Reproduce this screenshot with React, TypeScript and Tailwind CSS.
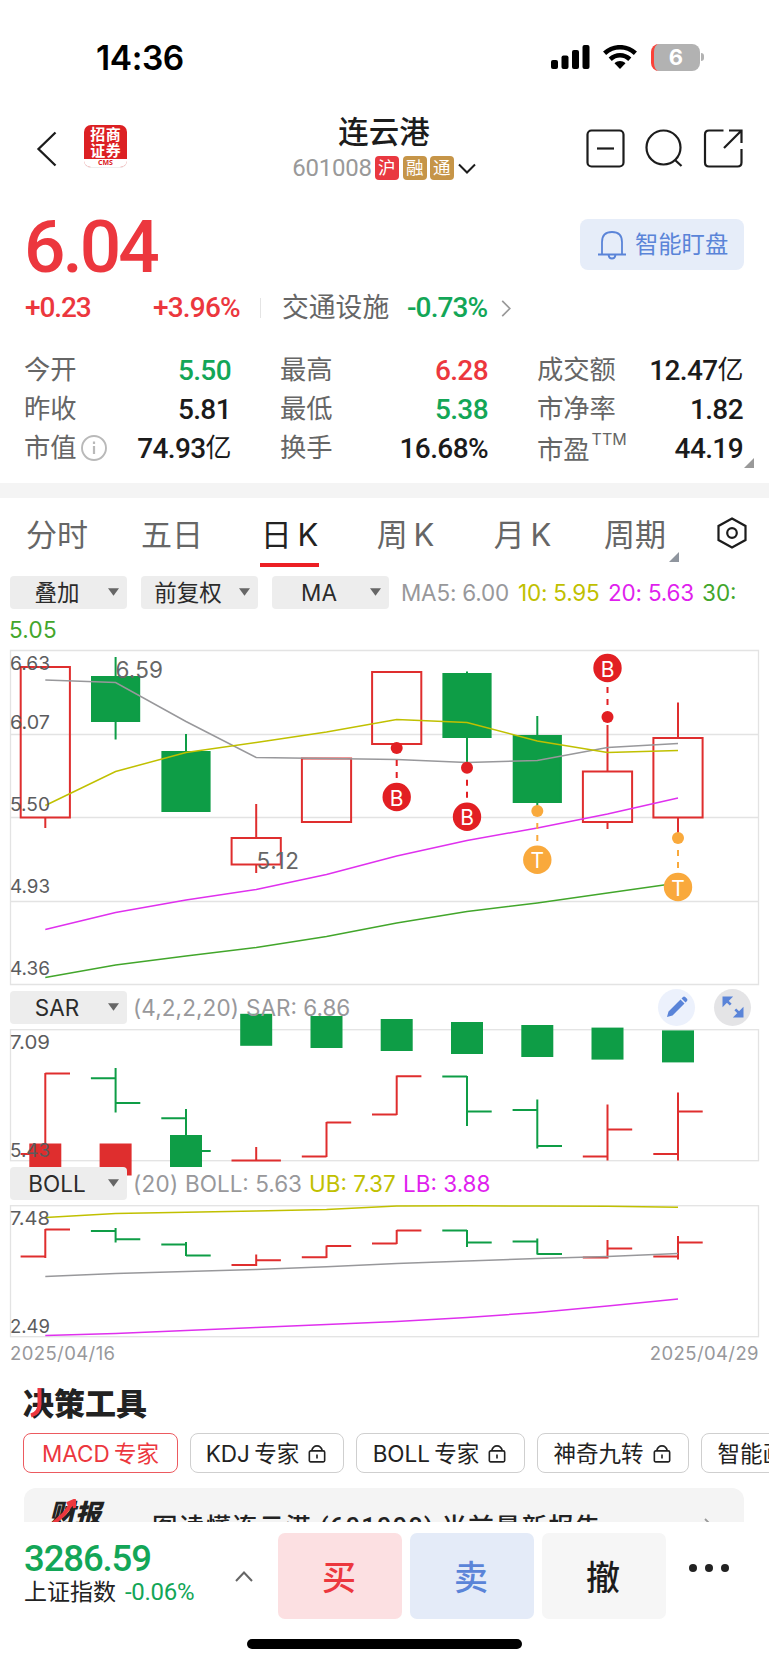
import { clsx } from "clsx";
import type { ReactNode } from "react";

const RED = "#df2e2e";
const GREEN = "#0e9d46";

// open, close, high, low as y values inside the panel
type Bar = { up: boolean; o: number; c: number; h: number; l: number };

const X = [45.3, 115.6, 186, 256.2, 326.5, 396.7, 467, 537.3, 607.5, 678];

const bar = (up: boolean, o: number, c: number, h: number, l: number): Bar => ({ up, o, c, h, l });

const CANDLES: Bar[] = [
  bar(true, 817.5, 667, 667, 828),
  bar(false, 677, 721, 657, 739.5),
  bar(false, 752, 811, 734, 811),
  bar(true, 864.5, 838, 804, 873),
  bar(true, 822, 758.5, 758.5, 822),
  bar(true, 744, 672, 672, 744),
  bar(false, 674, 737, 671.5, 765),
  bar(false, 736, 802, 716, 806),
  bar(true, 822, 771.5, 725, 829),
  bar(true, 817.5, 738, 702.5, 835),
];

const AVERAGES = [
  { color: "#98989b", ys: [680, 682.5, 721.5, 757.5, 758.5, 759.5, 762.5, 760.5, 747.5, 743.5] },
  { color: "#c0c000", ys: [805.5, 771.5, 752.5, 742.5, 732, 719.5, 722.5, 741, 752.5, 750.5] },
  { color: "#df30ee", ys: [929.5, 912.5, 900, 889.5, 874.5, 856, 840.5, 828, 814, 798] },
  { color: "#42a62b", ys: [977.5, 965, 956, 947.5, 936.5, 923, 911.5, 903, 893, 883] },
];

const MARKS = [
  { i: 5, label: "B", dot: 748, y: 797 },
  { i: 6, label: "B", dot: 767.8, y: 816.7 },
  { i: 7, label: "T", dot: 811, y: 859.7 },
  { i: 8, label: "B", dot: 717, y: 668 },
  { i: 9, label: "T", dot: 838, y: 887 },
];

const SAR_BARS: Bar[] = [
  bar(true, 1154, 1073.5, 1073, 1155),
  bar(false, 1078.3, 1103, 1068, 1112.5),
  bar(false, 1118.3, 1151, 1109, 1151),
  bar(true, 1160.5, 1160.5, 1147, 1160.5),
  bar(true, 1156.5, 1122.5, 1122, 1157),
  bar(true, 1114.5, 1076.2, 1075.5, 1115),
  bar(false, 1076.5, 1111.5, 1076, 1126),
  bar(false, 1110, 1146, 1099.5, 1148.5),
  bar(true, 1156.5, 1129.5, 1104.5, 1160.5),
  bar(true, 1154, 1111.5, 1092.5, 1160.5),
];

const SAR_TOPS = [1143.5, 1143.5, 1135, 1013.8, 1016, 1019, 1022, 1025, 1027.6, 1030.4];

const BOLL_BARS: Bar[] = [
  bar(true, 1256.5, 1229.5, 1229, 1258),
  bar(false, 1231, 1239.3, 1228, 1242.5),
  bar(false, 1244.5, 1255.5, 1242, 1256),
  bar(true, 1265, 1260.3, 1254.5, 1266),
  bar(true, 1257.3, 1246, 1245.5, 1258),
  bar(true, 1243.4, 1230.4, 1230, 1244),
  bar(false, 1230.6, 1242.4, 1230, 1247),
  bar(false, 1241.6, 1254, 1238.5, 1254.5),
  bar(true, 1257.5, 1248.4, 1240, 1258.5),
  bar(true, 1256.5, 1242.4, 1236, 1259.5),
];

const BANDS = [
  { color: "#c0c000", ys: [1217.5, 1213.5, 1212.3, 1211, 1209.5, 1206, 1205.8, 1206, 1206.3, 1207.3] },
  { color: "#98989b", ys: [1276.5, 1273.5, 1271.5, 1269.5, 1266.8, 1263.5, 1261, 1258.5, 1256.5, 1253.5] },
  { color: "#df30ee", ys: [1335.5, 1333.5, 1330.5, 1327.5, 1324.5, 1321.5, 1317.5, 1312.5, 1306, 1299] },
];

const STATS = [
  [
    { name: "今开", value: "5.50", tone: "text-[#13a657]" },
    { name: "最高", value: "6.28", tone: "text-[#ec373e]" },
    { name: "成交额", value: "12.47亿", tone: "text-[#1b1b1b]" },
  ],
  [
    { name: "昨收", value: "5.81", tone: "text-[#1b1b1b]" },
    { name: "最低", value: "5.38", tone: "text-[#13a657]" },
    { name: "市净率", value: "1.82", tone: "text-[#1b1b1b]" },
  ],
  [
    { name: "市值", value: "74.93亿", tone: "text-[#1b1b1b]", info: true },
    { name: "换手", value: "16.68%", tone: "text-[#1b1b1b]" },
    { name: "市盈", sup: "TTM", value: "44.19", tone: "text-[#1b1b1b]", corner: true },
  ],
];

const TABS = [
  { label: "分时", box: "w-[62px] ml-[26px]" },
  { label: "五日", box: "w-[62px] ml-[53px]" },
  { label: "日 K", box: "w-[59px] ml-[57px]", active: true },
  { label: "周 K", box: "w-[59px] ml-[57px]" },
  { label: "月 K", box: "w-[59px] ml-[58px]" },
  { label: "周期", box: "w-[62px] ml-[52px]", corner: true },
];

const TOOLS = [
  { label: "MACD 专家", box: "w-[155px]", active: true },
  { label: "KDJ 专家", box: "w-[154px]" },
  { label: "BOLL 专家", box: "w-[169px]" },
  { label: "神奇九转", box: "w-[152px]" },
  { label: "智能画线", box: "w-[152px]" },
];

function Lines({ series }: { series: { color: string; ys: number[] }[] }) {
  return (
    <>
      {series.map((s, n) => (
        <polyline
          key={n}
          points={s.ys.map((y, i) => `${X[i]},${y}`).join(" ")}
          fill="none"
          stroke={s.color}
          strokeWidth="1.5"
        />
      ))}
    </>
  );
}

function OhlcBars({ bars }: { bars: Bar[] }) {
  return (
    <>
      {bars.map((b, i) => (
        <path
          key={i}
          d={`M${X[i] - 24.7} ${b.o}H${X[i]}M${X[i]} ${b.c}H${X[i] + 24.7}M${X[i]} ${b.h}V${b.l}`}
          stroke={b.up ? RED : GREEN}
          strokeWidth="2"
          fill="none"
        />
      ))}
    </>
  );
}

function AxisText({ y, children }: { y: number; children: ReactNode }) {
  return (
    <text x="10" y={y} fontSize="19" fill="#5c5c5e" textLength="40" lengthAdjust="spacingAndGlyphs">
      {children}
    </text>
  );
}

function CandleChart() {
  return (
    <svg viewBox="0 650 769 335" className="block h-[335px] w-[769px] shrink-0 overflow-visible font-['Inter']">
      <path
        d="M10.5 650.5H758.5V984.5H10.5ZM10 734.5H758M10 817.5H758M10 901.5H758"
        fill="none"
        stroke="#e3e3e3"
        strokeWidth="1.3"
      />
      {CANDLES.map((c, i) => {
        const top = Math.min(c.o, c.c);
        const bottom = Math.max(c.o, c.c);
        return (
          <g key={i} stroke={c.up ? RED : GREEN} strokeWidth="2">
            <path d={`M${X[i]} ${c.h}V${top}M${X[i]} ${bottom}V${c.l}`} />
            <rect
              x={X[i] - (c.up ? 24.6 : 23.6)}
              y={top}
              width={c.up ? 49.2 : 47.2}
              height={bottom - top}
              fill={c.up ? "none" : GREEN}
            />
          </g>
        );
      })}
      <Lines series={AVERAGES} />
      <AxisText y={669.5}>6.63</AxisText>
      <AxisText y={728.5}>6.07</AxisText>
      <AxisText y={810.5}>5.50</AxisText>
      <AxisText y={892.5}>4.93</AxisText>
      <AxisText y={974.5}>4.36</AxisText>
      <text x="115.5" y="677.5" fontSize="22.5" fill="#666" textLength="47.5">6.59</text>
      <text x="256.5" y="869" fontSize="22.5" fill="#666" textLength="42.5">5.12</text>
      {MARKS.map((m) => {
        const color = m.label === "B" ? "#e21f23" : "#f9a93c";
        const dir = m.y > m.dot ? 1 : -1;
        return (
          <g key={m.i}>
            <line
              x1={X[m.i]}
              x2={X[m.i]}
              y1={m.dot + dir * 12}
              y2={m.y - dir * 14}
              stroke={color}
              strokeWidth="2"
              strokeDasharray="6 6"
            />
            <circle cx={X[m.i]} cy={m.dot} r="6" fill={color} />
            <circle cx={X[m.i]} cy={m.y} r="14.2" fill={color} />
            <text x={X[m.i]} y={m.y + 8.5} fontSize="21" fill="#fff" textAnchor="middle">
              {m.label}
            </text>
          </g>
        );
      })}
    </svg>
  );
}

function SarChart() {
  return (
    <svg viewBox="0 1029 769 132" className="block h-[132px] w-[769px] shrink-0 overflow-visible font-['Inter']">
      <rect x="10.5" y="1029.7" width="748" height="131" fill="none" stroke="#e3e3e3" strokeWidth="1.3" />
      <OhlcBars bars={SAR_BARS} />
      {SAR_TOPS.map((y, i) => (
        <rect key={i} x={X[i] - 16} y={y} width="32" height="32" fill={i < 2 ? RED : GREEN} />
      ))}
      <AxisText y={1048.5}>7.09</AxisText>
      <AxisText y={1156.5}>5.43</AxisText>
    </svg>
  );
}

function BollChart() {
  return (
    <svg viewBox="0 1205 769 132" className="block h-[132px] w-[769px] shrink-0 overflow-visible font-['Inter']">
      <rect x="10.5" y="1205.7" width="748" height="131" fill="none" stroke="#e3e3e3" strokeWidth="1.3" />
      <OhlcBars bars={BOLL_BARS} />
      <Lines series={BANDS} />
      <AxisText y={1224.5}>7.48</AxisText>
      <AxisText y={1332.5}>2.49</AxisText>
    </svg>
  );
}

function Dropdown({ children }: { children: ReactNode }) {
  return (
    <button
      type="button"
      className="relative flex h-[33px] w-[117px] shrink-0 items-center rounded-[4px] bg-[#ededed] pt-px pr-[23px] text-[22.5px] text-[#2b2b2b]"
    >
      <span className="flex-1 text-center whitespace-nowrap">{children}</span>
      <svg viewBox="0 0 12 8" className="absolute top-[12px] right-[8px] h-[8px] w-[11px] fill-[#666]">
        <path d="M0 0H12L6 8Z" />
      </svg>
    </button>
  );
}

function Lock() {
  return (
    <svg viewBox="0 0 20 20" className="h-[20px] w-[18px]" fill="none" stroke="#222" strokeWidth="1.8">
      <rect x="1.5" y="6.5" width="17" height="12.3" rx="1.5" />
      <path d="M4 6.5C5 3 7 1 10 1s5 2 6 5.5M10 10.5V15" />
    </svg>
  );
}

function StatusBar() {
  return (
    <div className="flex h-[110px] shrink-0 items-center pl-[96px] font-['Inter']">
      <span className="mt-[7px] w-[455px] text-[33.5px] leading-none font-semibold tracking-[-0.4px] text-black">14:36</span>
      <svg viewBox="0 0 39 24" className="mt-[4px] h-[24px] w-[39px]">
        <rect x="0" y="15" width="7" height="9" rx="2" />
        <rect x="10.5" y="10.5" width="7" height="13.5" rx="2" />
        <rect x="21" y="5" width="7" height="19" rx="2" />
        <rect x="31.5" y="0" width="7" height="24" rx="2" />
      </svg>
      <svg viewBox="0 0 34 24" className="mt-[4px] ml-[13px] h-[24px] w-[34px]" fill="none" stroke="#000" strokeWidth="4.6">
        <path d="M1.6 8.3C10.5 0.2 23.5 0.2 32.4 8.3" />
        <path d="M7.2 14.2C13 8.9 21 8.9 26.8 14.2" />
        <path d="M11.5 18.2C14.5 15.4 19.5 15.4 22.5 18.2L17 24Z" fill="#000" stroke="none" />
      </svg>
      <div className="mt-[4px] ml-[14px] flex h-[27px] w-[49px] items-center justify-center overflow-hidden rounded-[8px] border-l-[3px] border-[#fb4238] bg-[#b2b2b2] pr-[2px] text-[22px] font-bold text-white">
        6
      </div>
      <div className="mt-[4px] ml-[1px] h-[8px] w-[3px] rounded-r-full bg-[#b2b2b2]" />
    </div>
  );
}

function TopNav() {
  return (
    <div className="flex h-[84px] shrink-0 pl-[36px] text-[#1c1c1c]">
      <svg viewBox="0 0 21 36" className="mt-[21px] h-[36px] w-[21px]" fill="none" stroke="currentColor" strokeWidth="2.3">
        <path d="M19.5 1.5L2.5 18L19.5 34.5" />
      </svg>
      <div className="mt-[15px] ml-[27px] flex h-[43px] w-[43px] flex-col overflow-hidden rounded-[7px] border-b border-[#eee] bg-[#dc2023] text-center">
        <div className="grid h-[35px] grid-cols-2 justify-center px-[6px] pt-[2px] text-[15px] leading-[16px] font-bold text-white">
          <span>招</span>
          <span>商</span>
          <span>证</span>
          <span>券</span>
        </div>
        <div className="h-[8px] bg-white font-['Open_Sans'] text-[7px] leading-[8px] font-bold text-[#dc2023]">CMS</div>
      </div>
      <div className="ml-[157px] flex w-[200px] flex-col items-center">
        <h1 className="mt-[2px] text-[30.5px] leading-[40px] font-medium">连云港</h1>
        <div className="mt-[4px] flex h-[24px] items-center">
          <span className="mr-[3px] font-['Roboto'] text-[24px] tracking-[-0.2px] text-[#999]">601008</span>
          <span className="mr-[4px] flex size-[24px] items-center justify-center rounded-[4px] bg-[#e93840] text-[17.5px] text-white">沪</span>
          <span className="mr-[3px] flex size-[24px] items-center justify-center rounded-[4px] bg-[#c69548] text-[17.5px] text-white">融</span>
          <span className="mr-[4px] flex size-[24px] items-center justify-center rounded-[4px] bg-[#c69548] text-[17.5px] text-white">通</span>
          <svg viewBox="0 0 18 11" className="h-[11px] w-[18px]" fill="none" stroke="currentColor" strokeWidth="2">
            <path d="M1 1.5L9 9.5L17 1.5" />
          </svg>
        </div>
      </div>
      <svg viewBox="0 0 39 39" className="mt-[19px] ml-[102px] h-[39px] w-[39px]" fill="none" stroke="currentColor" strokeWidth="2.2">
        <rect x="1.5" y="1.5" width="36" height="36" rx="4" />
        <path d="M11 19.5H28" />
      </svg>
      <svg viewBox="0 0 39 39" className="mt-[19px] ml-[20px] h-[39px] w-[39px]" fill="none" stroke="currentColor" strokeWidth="2.2">
        <circle cx="18.5" cy="18.5" r="17" />
        <path d="M30 31L36.5 37" />
      </svg>
      <svg viewBox="0 0 40 39" className="mt-[19px] ml-[19px] h-[39px] w-[40px]" fill="none" stroke="currentColor" strokeWidth="2.2">
        <path d="M20.5 1.5H6Q2 1.5 2 5.5V33.5Q2 37.5 6 37.5H34.5Q38.5 37.5 38.5 33.5V20M26 1.5H38.5V14M38 2L21 19" />
      </svg>
    </div>
  );
}

function Quote() {
  return (
    <div className="h-[289px] shrink-0 font-['Roboto','Noto_Sans_CJK_SC',sans-serif]">
      <div className="flex h-[88px] items-center justify-between pr-[25px] pl-[24px]">
        <span className="mt-[18px] text-[73px] leading-none font-medium tracking-[-3px] text-[#ec373e]">6.04</span>
        <button type="button" className="mt-[13px] flex h-[51px] w-[164px] items-center rounded-[8px] bg-[#e6edf9] pl-[17px] text-[#5a84d8]">
          <svg viewBox="0 0 30 30" className="h-[30px] w-[30px]" fill="none" stroke="currentColor" strokeWidth="1.8">
            <path d="M1 24.5H29M5 24.5V12Q5 2 15 2Q25 2 25 12V24.5M11.5 25Q12 28.5 15 28.5Q18 28.5 18.5 25" />
          </svg>
          <span className="mt-px ml-[8px] text-[23.3px] whitespace-nowrap">智能盯盘</span>
        </button>
      </div>
      <div className="flex h-[52px] items-center pl-[25px] text-[28px] font-medium">
        <span className="w-[128px] tracking-[-1.1px] text-[#ec373e]">+0.23</span>
        <span className="w-[107px] tracking-[-0.8px] text-[#ec373e]">+3.96%</span>
        <span className="h-[20px] w-px bg-[#e4e4e4]" />
        <span className="ml-[21px] w-[125px] text-[26.8px] font-normal text-[#666]">交通设施</span>
        <span className="w-[94px] tracking-[-0.9px] text-[#13a657]">-0.73%</span>
        <svg viewBox="0 0 10 18" className="h-[17px] w-[10px]" fill="none" stroke="#999" strokeWidth="1.8">
          <path d="M1 1L9 9L1 17" />
        </svg>
      </div>
      <div className="mt-[17px]">
        {STATS.map((row, r) => (
          <div key={r} className="grid h-[39px] grid-cols-[207px_208px_206px] gap-x-[49px] pl-[24px]">
            {row.map((s) => (
              <div key={s.name} className="relative flex items-center justify-between leading-none">
                <span className={clsx("flex items-center text-[26.3px] text-[#666]", "sup" in s && "mt-[4px]")}>
                  {s.name}
                  {"sup" in s ? <sup className="top-[-11px] ml-[2px] font-['Inter'] text-[16px]">TTM</sup> : null}
                  {"info" in s ? (
                    <svg viewBox="0 0 26 26" className="ml-[4px] h-[26px] w-[26px]" fill="none" stroke="#b9b9b9" strokeWidth="1.9">
                      <circle cx="13" cy="13" r="12" />
                      <path d="M13 11V19M13 6.5V9" strokeWidth="2.2" />
                    </svg>
                  ) : null}
                </span>
                <span className={clsx("flex text-[28px] font-medium tracking-[-0.6px]", s.tone)}>
                  {s.value.replace("亿", "")}
                  {s.value.endsWith("亿") ? <span className="text-[26px] font-normal">亿</span> : null}
                </span>
                {"corner" in s ? (
                  <svg viewBox="0 0 10 10" className="absolute right-[-11px] bottom-0 size-[10px] fill-[#999]">
                    <path d="M10 0V10H0Z" />
                  </svg>
                ) : null}
              </div>
            ))}
          </div>
        ))}
      </div>
    </div>
  );
}

function PeriodTabs() {
  return (
    <div className="flex h-[78px] shrink-0 text-[31px] text-[#666]">
      {TABS.map((t) => (
        <div key={t.label} className={clsx("relative flex h-[69px] shrink-0 justify-center", t.box, t.active && "border-b-4 border-[#ec1f24] text-[#222]")}>
          <span className="mt-[15px] leading-[44px] whitespace-nowrap [word-spacing:-3px]">{t.label}</span>
          {t.corner ? (
            <svg viewBox="0 0 10 10" className="absolute right-[-13px] bottom-[5px] size-[10px] fill-[#8f959e]">
              <path d="M10 0V10H0Z" />
            </svg>
          ) : null}
        </div>
      ))}
      <svg viewBox="0 0 30 32" className="mt-[19px] ml-[51px] h-[32px] w-[30px]" fill="none" stroke="#1c1c1c" strokeWidth="2.2">
        <path d="M15 1.5L28.5 9V23L15 30.5L1.5 23V9Z" />
        <circle cx="15" cy="16" r="4.8" />
      </svg>
    </div>
  );
}

function TradeBar() {
  return (
    <div className="relative z-10 h-[143px] shrink-0 bg-white">
      <div className="flex h-[98px]">
        <div className="w-[210px] pl-[24px]">
          <div className="mt-[17px] font-['Roboto'] text-[36.5px] leading-[40px] font-medium tracking-[-1.1px] text-[#13a657]">3286.59</div>
          <div className="flex h-[28px] items-center pb-[2px] leading-none">
            <span className="w-[101px] text-[23px] text-[#222]">上证指数</span>
            <span className="font-['Roboto'] text-[24px] tracking-[-0.3px] text-[#13a657]">-0.06%</span>
          </div>
        </div>
        <svg viewBox="0 0 18 11" className="mt-[49px] ml-[25px] h-[11px] w-[18px]" fill="none" stroke="#666" strokeWidth="2">
          <path d="M1 10L9 1.5L17 10" />
        </svg>
        <div className="mt-[11px] ml-[25px] flex h-[86px] gap-[8px] text-[34px] font-medium">
          <button type="button" className="w-[124px] rounded-[7px] bg-[#fce0e2] pt-[2px] pr-[2px] text-[#ec373e]">买</button>
          <button type="button" className="w-[124px] rounded-[7px] bg-[#e4ebf8] pt-[2px] pr-[2px] text-[#5a84d8]">卖</button>
          <button type="button" className="w-[124px] rounded-[7px] bg-[#f6f6f6] pt-[2px] pr-[2px] text-[#1c1c1c]">撤</button>
        </div>
        <div className="mt-[42px] ml-[23px] flex h-[8px] gap-[8px]">
          <i className="size-[8px] rounded-full bg-[#222]" />
          <i className="size-[8px] rounded-full bg-[#222]" />
          <i className="size-[8px] rounded-full bg-[#222]" />
        </div>
      </div>
      <div className="mt-[19px] ml-[247px] h-[10px] w-[275px] rounded-full bg-black" />
    </div>
  );
}

export default function App() {
  return (
    <main className="flex h-[1665px] w-[769px] flex-col overflow-hidden bg-white font-['Inter','Noto_Sans_CJK_SC',sans-serif]">
      <StatusBar />
      <TopNav />
      <Quote />
      <div className="h-[15px] shrink-0 bg-[#f4f4f4]" />
      <PeriodTabs />

      <div className="h-[74px] shrink-0 text-[22.5px]">
        <div className="flex h-[33px] items-center pl-[10px]">
          <Dropdown>叠加</Dropdown>
          <span className="w-[14px]" />
          <Dropdown>前复权</Dropdown>
          <span className="w-[14px]" />
          <Dropdown>MA</Dropdown>
          <span className="mt-px ml-[12px] w-[117px] tracking-[-0.2px] whitespace-nowrap text-[#98989b]">MA5: 6.00</span>
          <span className="mt-px w-[90px] tracking-[-0.2px] whitespace-nowrap text-[#c0c000]">10: 5.95</span>
          <span className="mt-px w-[94px] tracking-[-0.2px] whitespace-nowrap text-[#df1fee]">20: 5.63</span>
          <span className="mt-px text-[#42a62b]">30:</span>
        </div>
        <div className="pt-[6px] pl-[9px] leading-[30px] tracking-[0.3px] text-[#42a62b]">5.05</div>
      </div>

      <CandleChart />

      <div className="relative z-10 flex h-[44px] shrink-0 items-center pl-[10px] text-[22.5px] text-[#98989b]">
        <Dropdown>SAR</Dropdown>
        <span className="mt-px ml-[6px] w-[113px] tracking-[0.1px]">(4,2,2,20)</span>
        <span className="mt-px w-[412px]">SAR: 6.86</span>
        <button type="button" className="flex size-[37px] items-center justify-center rounded-full bg-[#ecf1fc]">
          <svg viewBox="0 0 22 22" className="size-[22px] fill-[#5a84d8]">
            <path d="M14.5 3.5L18.5 7.5L6.5 19.5L1 21L2.5 15.5ZM15.5 2.5L17 1Q18 0 19.2 1L21 2.8Q22 4 21 5L19.5 6.5Z" />
          </svg>
        </button>
        <button type="button" className="ml-[19px] flex size-[37px] items-center justify-center rounded-full bg-[#e4e4e6]">
          <svg viewBox="0 0 22 22" className="size-[22px]" fill="#5a84d8" stroke="#5a84d8" strokeWidth="2.6">
            <path d="M1.800 8V1.800H8ZM2 2L8.700 8.700M13.300 13.300L20 20M20.200 14V20.200H14Z" />
          </svg>
        </button>
      </div>

      <SarChart />

      <div className="relative z-10 flex h-[44px] shrink-0 items-center pl-[10px] text-[22.5px] text-[#98989b]">
        <Dropdown>BOLL</Dropdown>
        <span className="mt-px ml-[6px] w-[52px] tracking-[0.3px]">(20)</span>
        <span className="mt-px w-[124px] whitespace-nowrap">BOLL: 5.63</span>
        <span className="mt-px w-[94px] whitespace-nowrap text-[#c0c000]">UB: 7.37</span>
        <span className="mt-px text-[#df1fee]">LB: 3.88</span>
      </div>

      <BollChart />

      <div className="flex h-[32px] shrink-0 items-center justify-between pt-px pr-[10px] pl-[10px] text-[18.5px] tracking-[0.4px] text-[#98989b]">
        <span>2025/04/16</span>
        <span>2025/04/29</span>
      </div>

      <div className="h-[153px] shrink-0 overflow-hidden">
        <h2 className="relative ml-[23px] h-[64px] pt-[13px] text-[31px] leading-[44px] font-black text-[#222]">
          决策工具
          <svg viewBox="0 0 14 30" className="absolute top-[19px] left-[6px] h-[30px] w-[14px]" fill="none" stroke="#ec373e" strokeWidth="4">
            <path d="M10.5 0V16Q10.5 25 2 27.5" />
          </svg>
        </h2>
        <div className="flex gap-[12px] pl-[23px]">
          {TOOLS.map((t) => (
            <button
              key={t.label}
              type="button"
              className={clsx(
                "flex h-[40px] shrink-0 items-center justify-center gap-[9px] rounded-[8px] border pt-px text-[22.5px] whitespace-nowrap [word-spacing:-2px]",
                t.box,
                t.active ? "border-[#ec5a60] text-[#ec373e]" : "border-[#cfcfcf] pr-[2px] text-[#222]",
              )}
            >
              {t.label}
              {t.active ? null : <Lock />}
            </button>
          ))}
        </div>
        <div className="mt-[15px] ml-[24px] flex h-[80px] w-[720px] rounded-[12px] bg-[#f4f4f4] pl-[25px] text-[#222]">
          <span className="relative mt-[9px] w-[103px] text-[26px] leading-[34px] font-black italic">
            财报
            <svg viewBox="0 0 26 28" className="absolute top-[2px] left-[1px] h-[28px] w-[26px]" fill="none" stroke="#ec373e" strokeWidth="4">
              <path d="M2 26L14 15L23 3M17 5L24 2L25 9" />
            </svg>
          </span>
          <span className="mt-[22px] w-[512px] font-['Roboto','Noto_Sans_CJK_SC'] text-[25.500px] leading-[34px] font-medium tracking-[1.200px] whitespace-nowrap">
            图读懂连云港 (601008) 当前最新报告
          </span>
          <svg viewBox="0 0 10 18" className="mt-[30px] ml-[40px] h-[18px] w-[10px]" fill="none" stroke="#999" strokeWidth="1.8">
            <path d="M1 1L9 9L1 17" />
          </svg>
        </div>
      </div>

      <TradeBar />
    </main>
  );
}
